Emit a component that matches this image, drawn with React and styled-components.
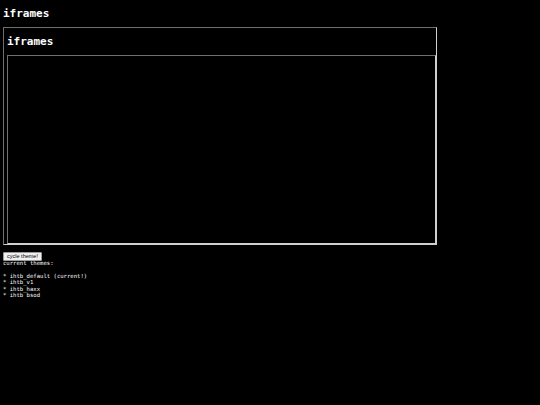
import React from "react";
import styled, { createGlobalStyle } from "styled-components";

const GlobalStyle = createGlobalStyle`
  html, body {
    margin: 0;
    padding: 0;
    background: #000;
    color: #fff;
    font-family: "DejaVu Sans Mono", monospace;
  }
`;

const Page = styled.div`
  padding: 0 3px;
`;

const Title = styled.h1`
  margin: 7px 0;
  font-size: 11px;
  line-height: 13px;
  font-weight: bold;
`;

// mimics the default iframe "inset" border
const Frame = styled.div`
  box-sizing: border-box;
  width: ${(p) => p.$w}px;
  height: ${(p) => p.$h}px;
  border: 1px solid;
  border-color: #6f6f6f #cfcfcf #cfcfcf #6f6f6f;
  padding: 0 0 0 3px;
  overflow: hidden;
`;

const NestedFrame = styled(Frame)`
  padding: 0;
`;

const ThemeButton = styled.button`
  display: block;
  margin: 7px 0 0;
  box-sizing: border-box;
  width: 39px;
  height: 9px;
  padding: 0;
  border: 1px solid #9a9a9a;
  border-radius: 1px;
  background: #efefef;
  color: #000;
  font-family: "Liberation Sans", Arial, sans-serif;
  font-size: 5.5px;
  line-height: 7px;
`;

const Info = styled.div`
  margin-top: -1px;
  font-size: 5.6px;
  line-height: 6.4px;
  white-space: pre;
`;

const themes = ["ihtb_default (current!)", "ihtb_v1", "ihtb_haxx", "ihtb_bsod"];

export default function App() {
  return (
    <>
      <GlobalStyle />
      <Page>
        <Title>iframes</Title>
        <Frame $w={434} $h={218}>
          <Title>iframes</Title>
          <NestedFrame $w={429} $h={189} />
        </Frame>
        <ThemeButton>cycle theme!</ThemeButton>
        <Info>
          {"current themes:\n\n"}
          {themes.map((t) => `* ${t}`).join("\n")}
        </Info>
      </Page>
    </>
  );
}
